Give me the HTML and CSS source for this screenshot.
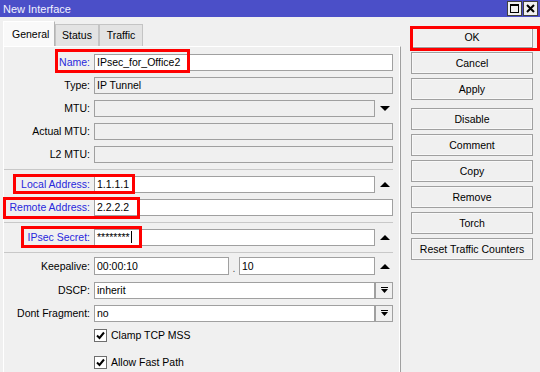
FILE: index.html
```html
<!DOCTYPE html>
<html lang="en">
<head>
    <meta charset="UTF-8">
    <title>New Interface</title>
    <link rel="stylesheet" href="styles.css">
</head>
<body>

    <div class="titlebar">
        <span class="title">New Interface</span>
        <div class="winbtns">
            <span class="wbtn">
                <svg width="11" height="11" viewBox="0 0 11 11"><rect x="1.5" y="1.5" width="8" height="8" fill="none" stroke="#000" stroke-width="1"/><rect x="1" y="1" width="9" height="2" fill="#000"/></svg>
            </span>
            <span class="wbtn">
                <svg width="11" height="11" viewBox="0 0 11 11"><path d="M2 2 L9 9 M9 2 L2 9" stroke="#000" stroke-width="2"/></svg>
            </span>
        </div>
    </div>

    <div class="main">
        <div class="left">
            <div class="tabs">
                <div class="tab active">General</div>
                <div class="tab">Status</div>
                <div class="tab">Traffic</div>
            </div>

            <div class="panel">
                <div class="row">
                    <span class="lbl req">Name:</span>
                    <div class="field full">IPsec_for_Office2</div>
                    <span class="mark mark-name"></span>
                </div>
                <div class="row">
                    <span class="lbl">Type:</span>
                    <div class="field full off">IP Tunnel</div>
                </div>
                <div class="row">
                    <span class="lbl">MTU:</span>
                    <div class="field short off"></div>
                    <span class="arrow down"></span>
                </div>
                <div class="row">
                    <span class="lbl">Actual MTU:</span>
                    <div class="field full off"></div>
                </div>
                <div class="row">
                    <span class="lbl">L2 MTU:</span>
                    <div class="field full off"></div>
                </div>

                <div class="sep"></div>

                <div class="row">
                    <span class="lbl req">Local Address:</span>
                    <div class="field short">1.1.1.1</div>
                    <span class="arrow up"></span>
                    <span class="mark mark-local"></span>
                </div>
                <div class="row">
                    <span class="lbl req">Remote Address:</span>
                    <div class="field full">2.2.2.2</div>
                    <span class="mark mark-remote"></span>
                </div>

                <div class="sep"></div>

                <div class="row">
                    <span class="lbl req">IPsec Secret:</span>
                    <div class="field short">********<span class="caret"></span></div>
                    <span class="arrow up"></span>
                    <span class="mark mark-secret"></span>
                </div>

                <div class="sep sep-tight"></div>

                <div class="row row-ka">
                    <span class="lbl">Keepalive:</span>
                    <div class="field ka1">00:00:10</div>
                    <span class="dot">.</span>
                    <div class="field ka2">10</div>
                    <span class="arrow up"></span>
                </div>
                <div class="row">
                    <span class="lbl">DSCP:</span>
                    <div class="field short">inherit</div>
                    <span class="ddbtn">
                        <svg width="7" height="7" viewBox="0 0 7 7"><rect x="0" y="0" width="7" height="1" fill="#000"/><path d="M0 2 H7 L3.5 6 Z" fill="#000"/></svg>
                    </span>
                </div>
                <div class="row">
                    <span class="lbl">Dont Fragment:</span>
                    <div class="field short">no</div>
                    <span class="ddbtn">
                        <svg width="7" height="7" viewBox="0 0 7 7"><rect x="0" y="0" width="7" height="1" fill="#000"/><path d="M0 2 H7 L3.5 6 Z" fill="#000"/></svg>
                    </span>
                </div>

                <div class="check">
                    <span class="box">
                        <svg width="11" height="11" viewBox="0 0 11 11"><path d="M2 5.5 L4.5 8 L9 2.5" fill="none" stroke="#000" stroke-width="2"/></svg>
                    </span>
                    Clamp TCP MSS
                </div>
                <div class="check">
                    <span class="box">
                        <svg width="11" height="11" viewBox="0 0 11 11"><path d="M2 5.5 L4.5 8 L9 2.5" fill="none" stroke="#000" stroke-width="2"/></svg>
                    </span>
                    Allow Fast Path
                </div>
            </div>
        </div>

        <div class="side">
            <div class="btn btn-ok">OK<span class="mark mark-ok"></span></div>
            <div class="btn">Cancel</div>
            <div class="btn">Apply</div>
            <div class="btn gap">Disable</div>
            <div class="btn">Comment</div>
            <div class="btn">Copy</div>
            <div class="btn">Remove</div>
            <div class="btn">Torch</div>
            <div class="btn">Reset Traffic Counters</div>
        </div>
    </div>

</body>
</html>
```

FILE: styles.css
```css
body {
    margin: 0;
    background-color: #f0f0f0;
    font-family: "Liberation Sans", Arial, sans-serif;
    font-size: 10.5px;
    color: #000;
    overflow: hidden;
    height: 372px;
}

/* window title */
.titlebar {
    height: 17px;
    background-color: #4b4fc8;
    color: #f2f2ff;
    display: flex;
    align-items: center;
    justify-content: space-between;
    padding-left: 3px;
}

.title {
    font-size: 11px;
}

.winbtns {
    display: flex;
    gap: 1px;
    padding-right: 2px;
    align-self: flex-start;
    margin-top: 1px;
}

.wbtn {
    width: 15px;
    height: 15px;
    box-sizing: border-box;
    background-color: #f0f0f0;
    border: 1px solid #404040;
    display: flex;
    align-items: center;
    justify-content: center;
}

.main {
    display: flex;
}

/* tabs + form */
.left {
    width: 398px;
    padding-left: 3px;
}

.tabs {
    display: flex;
    align-items: flex-end;
    height: 25px;
    margin-top: 4px;
}

.tab {
    width: 44px;
    height: 22px;
    box-sizing: border-box;
    background-color: #e3e3e3;
    border: 1px solid #c4c4c4;
    border-bottom: none;
    text-align: center;
    line-height: 21px;
}

.tab.active {
    width: 52px;
    height: 25px;
    background-color: #f9f9f9;
    border-color: #ffffff #b4b4b4 #f9f9f9 #ffffff;
    line-height: 25px;
    text-align: left;
    padding-left: 8px;
}

.panel {
    height: 330px;
    border-top: 1px solid #ffffff;
    border-left: 1px solid #ffffff;
    border-right: 1px solid #a0a0a0;
    box-shadow: inset -1px 0 #ffffff;
    padding-top: 7px;
}

.row {
    position: relative;
    display: flex;
    align-items: center;
    height: 17px;
    margin-bottom: 6px;
}

.row.row-ka {
    height: 18px;
    margin-bottom: 7px;
}

.row-ka .field {
    height: 18px;
    line-height: 16px;
}

.lbl {
    width: 90px;
    box-sizing: border-box;
    padding-right: 4px;
    text-align: right;
    white-space: nowrap;
    line-height: 17px;
}

.lbl.req {
    color: #2828dc;
}

.field {
    height: 17px;
    box-sizing: border-box;
    border: 1px solid #a0a0a0;
    background-color: #fff;
    padding-left: 2px;
    line-height: 15px;
    white-space: nowrap;
    overflow: hidden;
}

.field.off {
    background-color: #f0f0f0;
}

.field.full {
    width: 299px;
}

.field.short {
    width: 281px;
}

.field.ka1 {
    width: 135px;
}

.field.ka2 {
    width: 136px;
}

.dot {
    width: 10px;
    text-align: center;
    align-self: flex-end;
    line-height: 14px;
    color: #555;
}

.caret {
    display: inline-block;
    width: 1px;
    height: 12px;
    background-color: #000;
    vertical-align: -2px;
    margin-left: 1px;
}

.arrow {
    width: 0;
    height: 0;
    margin-left: 5px;
    border-left: 5px solid transparent;
    border-right: 5px solid transparent;
}

.arrow.down {
    border-top: 5px solid #000;
}

.arrow.up {
    border-bottom: 5px solid #000;
}

.ddbtn {
    width: 18px;
    height: 17px;
    box-sizing: border-box;
    border: 1px solid #a0a0a0;
    background-color: #f0f0f0;
    display: flex;
    align-items: center;
    justify-content: center;
}

.sep {
    border-top: 1px solid #c8c8c8;
    margin: 1px 7px 6px 0;
}

.sep.sep-tight {
    margin-bottom: 4px;
}

.check {
    display: flex;
    align-items: center;
    height: 14px;
    margin-left: 90px;
    margin-bottom: 13px;
}

.check .box {
    width: 13px;
    height: 13px;
    box-sizing: border-box;
    border: 1px solid #6e6e6e;
    background-color: #fff;
    display: flex;
    align-items: center;
    justify-content: center;
    margin-right: 4px;
}

/* red annotation boxes */
.mark {
    position: absolute;
    box-sizing: border-box;
    border: 3px solid #ff0000;
    pointer-events: none;
}

.mark-name {
    left: 51px;
    top: -5px;
    width: 135px;
    height: 24px;
}

.mark-local {
    left: 9px;
    top: -2px;
    width: 122px;
    height: 20px;
}

.mark-remote {
    left: -1px;
    top: -2px;
    width: 137px;
    height: 22px;
}

.mark-secret {
    left: 17px;
    top: -3px;
    width: 121px;
    height: 22px;
}

.mark-ok {
    left: -2px;
    top: -1px;
    width: 130px;
    height: 25px;
}

/* buttons column */
.side {
    width: 122px;
    margin-left: 10px;
    margin-top: 9px;
    display: flex;
    flex-direction: column;
    gap: 4px;
}

.btn {
    position: relative;
    height: 22px;
    box-sizing: border-box;
    border: 1px solid #a0a0a0;
    box-shadow: inset 0 0 0 1px #f8f8f8;
    background-color: #f0f0f0;
    text-align: center;
    line-height: 20px;
}

.btn.gap {
    margin-top: 4px;
}
```
